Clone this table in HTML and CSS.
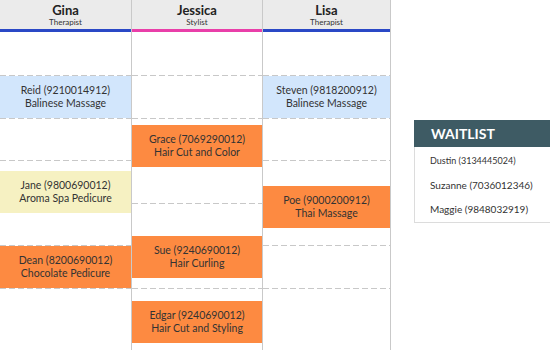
FILE: index.html
```html
<!DOCTYPE html>
<html>
<head>
<meta charset="utf-8">
<link rel="stylesheet" href="styles.css">
</head>
<body>
<div class="page">
  <div class="calendar">
    <div class="column col-gina">
      <div class="col-head head-blue">
        <div class="name">Gina</div>
        <div class="role">Therapist</div>
      </div>
      <div class="col-body">
        <div class="slot first"></div><div class="slot"></div><div class="slot"></div><div class="slot"></div><div class="slot"></div><div class="slot"></div><div class="slot last"></div>
        <div class="event ev-blue ev-reid"><div>Reid (9210014912)</div><div>Balinese Massage</div></div>
        <div class="event ev-yellow ev-jane"><div>Jane (9800690012)</div><div>Aroma Spa Pedicure</div></div>
        <div class="event ev-orange ev-dean"><div>Dean (8200690012)</div><div>Chocolate Pedicure</div></div>
      </div>
    </div>
    <div class="column col-jessica">
      <div class="col-head head-pink">
        <div class="name">Jessica</div>
        <div class="role">Stylist</div>
      </div>
      <div class="col-body">
        <div class="slot first"></div><div class="slot"></div><div class="slot"></div><div class="slot"></div><div class="slot"></div><div class="slot"></div><div class="slot last"></div>
        <div class="event ev-orange ev-grace"><div>Grace (7069290012)</div><div>Hair Cut and Color</div></div>
        <div class="event ev-orange ev-sue"><div>Sue (9240690012)</div><div>Hair Curling</div></div>
        <div class="event ev-orange ev-edgar"><div>Edgar (9240690012)</div><div>Hair Cut and Styling</div></div>
      </div>
    </div>
    <div class="column col-lisa">
      <div class="col-head head-blue">
        <div class="name">Lisa</div>
        <div class="role">Therapist</div>
      </div>
      <div class="col-body">
        <div class="slot first"></div><div class="slot"></div><div class="slot"></div><div class="slot"></div><div class="slot"></div><div class="slot"></div><div class="slot last"></div>
        <div class="event ev-blue ev-steven"><div>Steven (9818200912)</div><div>Balinese Massage</div></div>
        <div class="event ev-orange ev-poe"><div>Poe (9000200912)</div><div>Thai Massage</div></div>
      </div>
    </div>
  </div>
  <div class="waitlist">
    <div class="wl-head">WAITLIST</div>
    <div class="wl-body">
      <div class="wl-item small">Dustin (3134445024)</div>
      <div class="wl-item">Suzanne (7036012346)</div>
      <div class="wl-item">Maggie (9848032919)</div>
    </div>
  </div>
</div>
</body>
</html>
```

FILE: styles.css
```css
html, body {
  margin: 0;
  padding: 0;
  background: #ffffff;
  overflow: hidden;
}
body {
  width: 550px;
  height: 350px;
  font-family: Lato, "Open Sans", sans-serif;
  color: #333333;
}
.page {
  display: flex;
  align-items: flex-start;
  height: 350px;
}
.calendar {
  display: flex;
  height: 350px;
  flex: none;
}
.column {
  display: flex;
  flex-direction: column;
  border-right: 1px solid #c9c9c9;
  height: 350px;
}
.col-gina { width: 131px; }
.col-jessica { width: 130px; }
.col-lisa { width: 127px; }
.col-head {
  height: 29px;
  background: #ebebeb;
  border-bottom: 3px solid #2846c4;
  text-align: center;
  flex: none;
}
.head-blue { border-bottom-color: #2a48c6; }
.head-pink { border-bottom-color: #e93fa9; }
.name {
  font-size: 13px;
  font-weight: 700;
  line-height: 14px;
  padding-top: 3px;
  color: #222;
}
.role {
  font-size: 8px;
  line-height: 10px;
  color: #333;
}
.col-body {
  position: relative;
  flex: 1;
  overflow: hidden;
}
.slot {
  height: 42.5px;
  background-image: linear-gradient(to right, #c8c8c8 0 6px, transparent 6px 9px);
  background-size: 9px 1px;
  background-repeat: repeat-x;
  background-position: left bottom;
}
.slot.first { height: 44px; }
.slot.last { background-image: none; }
.event {
  position: absolute;
  left: 0;
  right: 0;
  height: 42px;
  display: flex;
  flex-direction: column;
  justify-content: center;
  align-items: center;
  font-size: 10.5px;
  line-height: 13.5px;
  color: #333;
}
.ev-blue { background: #d2e6fc; }
.ev-orange { background: #fd8a41; }
.ev-yellow { background: #f6f1c2; }
.ev-reid, .ev-steven { top: 44px; }
.ev-grace { top: 93px; }
.ev-jane { top: 139px; }
.ev-poe { top: 154px; }
.ev-sue { top: 204px; }
.ev-dean { top: 214px; }
.ev-edgar { top: 269px; }

.waitlist {
  margin-left: 23px;
  margin-top: 120px;
  width: 150px;
  flex: none;
}
.wl-head {
  height: 27px;
  background: #3e5b64;
  color: #ffffff;
  font-weight: 700;
  font-size: 14px;
  line-height: 27px;
  padding-left: 17px;
}
.wl-body {
  border: 1px solid #dcdcdc;
  border-top: none;
  padding: 2px 0 1px 0;
}
.wl-item {
  height: 24px;
  line-height: 24px;
  padding-left: 15px;
  font-size: 10px;
  color: #333;
}
.wl-item.small { font-size: 9px; }
```
